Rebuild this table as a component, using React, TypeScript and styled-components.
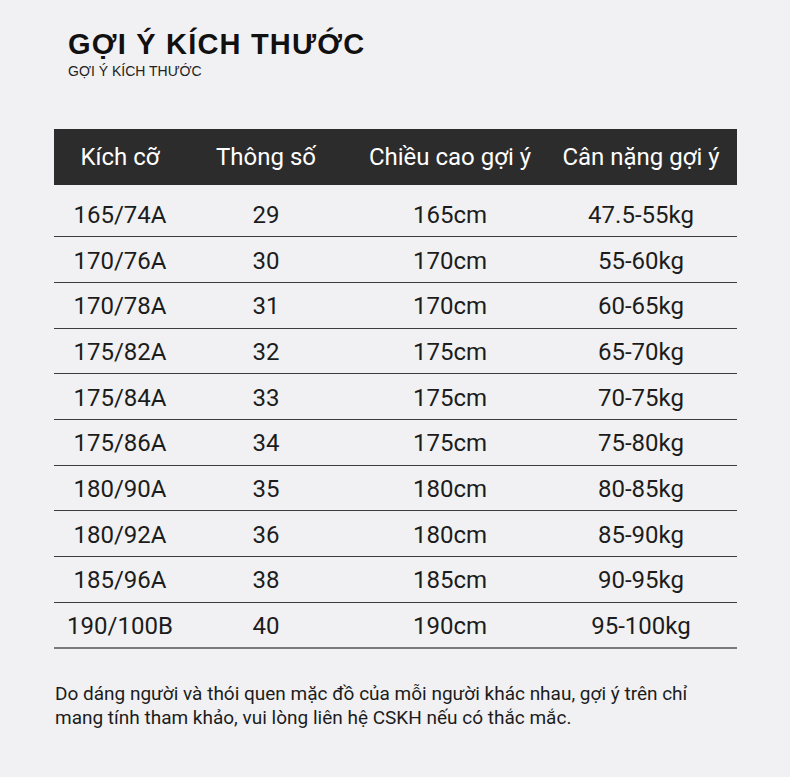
import React from "react";
import styled, { createGlobalStyle } from "styled-components";

const Global = createGlobalStyle`
  html, body { margin: 0; padding: 0; background: #f1f1f3; }
  body { font-family: Roboto, "Noto Sans", sans-serif; color: #1c1c1c; }
`;

const Page = styled.div`
  width: 790px;
  min-height: 777px;
  box-sizing: border-box;
  padding: 26px 0 0 54px;
  background: #f1f1f3;
`;

const TitleBlock = styled.div`
  padding-left: 14px;
  display: flex;
  flex-direction: column;
`;

const Title = styled.h1`
  margin: 0;
  font-family: "Liberation Sans", Arial, sans-serif;
  font-weight: 700;
  font-size: 29px;
  line-height: 36px;
  letter-spacing: 1.2px;
  color: #111;
`;

const Subtitle = styled.div`
  font-family: "Liberation Sans", Arial, sans-serif;
  font-size: 14px;
  line-height: 16px;
  margin-top: 1px;
  color: #222;
`;

const Table = styled.div`
  margin-top: 50px;
  width: 683px;
`;

const cols = "132px 160px 208px 174px";

const HeaderRow = styled.div`
  display: grid;
  grid-template-columns: ${cols};
  height: 56px;
  align-items: center;
  background: #2c2c2c;
  color: #fff;
  font-size: 24px;
`;

const Body = styled.div`
  padding-top: 7px;
`;

const Row = styled.div<{ $last?: boolean }>`
  display: grid;
  grid-template-columns: ${cols};
  align-items: center;
  height: 42.2px;
  padding-top: 2px;
  box-sizing: content-box;
  border-bottom: ${(p) => (p.$last ? "2px solid #7a7a7a" : "1.5px solid #3c3c3c")};
  font-size: 24px;
  color: #1c1c1c;

  & + & {
    height: 42.7px;
  }
`;

const Cell = styled.div`
  text-align: center;
  white-space: nowrap;
`;

const Note = styled.p`
  margin: 33px 0 0 1px;
  font-size: 19px;
  line-height: 24px;
  color: #1c1c1c;
  width: 700px;
`;

const headers = ["Kích cỡ", "Thông số", "Chiều cao gợi ý", "Cân nặng gợi ý"];
const rows = [
  ["165/74A", "29", "165cm", "47.5-55kg"],
  ["170/76A", "30", "170cm", "55-60kg"],
  ["170/78A", "31", "170cm", "60-65kg"],
  ["175/82A", "32", "175cm", "65-70kg"],
  ["175/84A", "33", "175cm", "70-75kg"],
  ["175/86A", "34", "175cm", "75-80kg"],
  ["180/90A", "35", "180cm", "80-85kg"],
  ["180/92A", "36", "180cm", "85-90kg"],
  ["185/96A", "38", "185cm", "90-95kg"],
  ["190/100B", "40", "190cm", "95-100kg"],
];

export default function App() {
  return (
    <Page>
      <Global />
      <TitleBlock>
        <Title>GỢI Ý KÍCH THƯỚC</Title>
        <Subtitle>GỢI Ý KÍCH THƯỚC</Subtitle>
      </TitleBlock>
      <Table>
        <HeaderRow>
          {headers.map((h) => (
            <Cell key={h}>{h}</Cell>
          ))}
        </HeaderRow>
        <Body>
          {rows.map((r, i) => (
            <Row key={r[0]} $last={i === rows.length - 1}>
              {r.map((c, j) => (
                <Cell key={j}>{c}</Cell>
              ))}
            </Row>
          ))}
        </Body>
      </Table>
      <Note>
        Do dáng người và thói quen mặc đồ của mỗi người khác nhau, gợi ý trên chỉ
        <br />
        mang tính tham khảo, vui lòng liên hệ CSKH nếu có thắc mắc.
      </Note>
    </Page>
  );
}
